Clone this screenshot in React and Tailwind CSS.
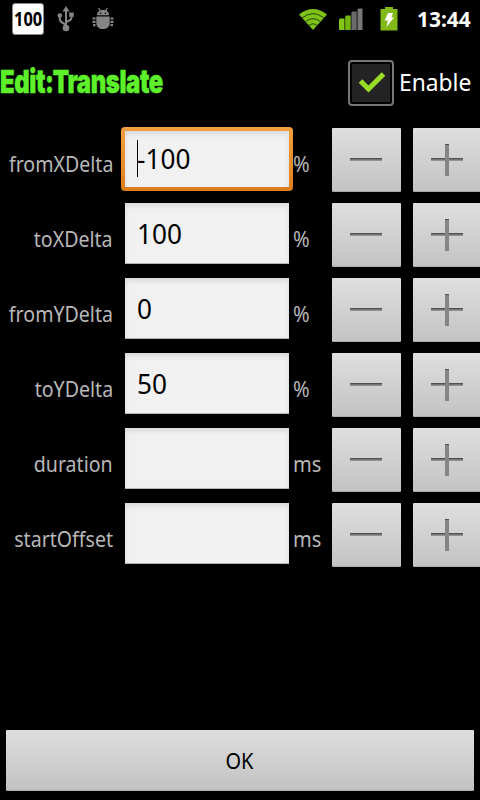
import React, { useState } from 'react';

const initialFields = [
  { name: 'fromXDelta', value: '-100', unit: '%' },
  { name: 'toXDelta', value: '100', unit: '%' },
  { name: 'fromYDelta', value: '0', unit: '%' },
  { name: 'toYDelta', value: '50', unit: '%' },
  { name: 'duration', value: '', unit: 'ms' },
  { name: 'startOffset', value: '', unit: 'ms' },
];

const UsbIcon = () => (
  <svg width="18" height="26" viewBox="0 0 18 26" fill="none" stroke="#858585" strokeWidth="2">
    <path d="M9 4v18M9 20C9 16.5 2.8 18 2.8 13V9.5M9 17c0-3 5.5-1 5.5-5.5V8.5" />
    <path d="M9 0l3.500 5.500H5.500z" fill="#858585" stroke="none" />
    <circle cx="9" cy="22" r="3.300" fill="#858585" stroke="none" />
    <circle cx="2.8" cy="9.5" r="2.3" fill="#858585" stroke="none" />
    <path d="M12.2 6.5h4.6v4.3h-4.6z" fill="#858585" stroke="none" />
  </svg>
);

const BugIcon = () => (
  <svg width="22" height="22" viewBox="0 0 22 22" fill="#858585">
    <path d="M5 7.300C5 4 7 2 11 2s6 2 6 5.300z" />
    <path d="M6.500 0l2 3M15.500 0l-2 3" stroke="#858585" strokeWidth="1.200" />
    <path d="M4.300 8.500h13.400v6.500c0 4-3 6-6.700 6S4.300 19 4.300 15z" />
    <path d="M.5 10.500H3.500M.5 13.800H3.500M1 17.200H3.500M18.500 10.500h3M18.500 13.800h3M18.500 17.200h2.500" fill="none" stroke="#858585" strokeWidth="2.200" />
    <circle cx="8.6" cy="5.2" r=".8" fill="#000" />
    <circle cx="13.4" cy="5.2" r=".8" fill="#000" />
  </svg>
);

const WifiIcon = () => (
  <svg width="32" height="26" viewBox="0 0 32 26">
    <path d="M2 8.500Q16-2.500 30 8.500L16 24z" fill="#7fc21a" />
    <path d="M5 12Q16 3.200 27 12M8.500 15.700Q16 9.600 23.500 15.700M12 19.500Q16 16.200 20 19.500" fill="none" stroke="#1d4a00" strokeWidth="1" />
  </svg>
);

const SignalIcon = () => (
  <svg width="24" height="23" viewBox="0 0 24 23">
    <path d="M0 11.500l1-1h4.500V22H0z" fill="#86c61a" />
    <path d="M6.200 8.500l1-1h4.500V22H6.200z" fill="#75b814" />
    <path d="M12.400 4.500l1-1h4.300V22h-5.300z" fill="#6b6b6b" />
    <path d="M18.500 1.500l1-1h4V22h-5z" fill="#777" />
  </svg>
);

const BatteryIcon = () => (
  <svg width="18" height="24" viewBox="0 0 18 24">
    <path d="M.5 2H5V0h8v2h4.500v21.500H.5z" fill="#80b918" />
    <path d="M8 6h5l-1.500 4.500H14L6.500 20l1.300-6.500H4.600z" fill="#fff" />
  </svg>
);

const StatusBar = () => (
  <header className="flex h-[38px] items-center pl-3">
    <div className="flex h-8 w-8 items-center justify-center rounded-[3px] border border-[#888] bg-white">
      <span className="scale-x-[.82] text-[20px] font-bold leading-none text-black">100</span>
    </div>
    <div className="ml-[13px] h-[26px] w-[18px]"><UsbIcon /></div>
    <div className="ml-[17px] h-[22px] w-[22px]"><BugIcon /></div>
    <div className="ml-[183px] h-[26px] w-8"><WifiIcon /></div>
    <div className="ml-[10px] h-[23px] w-6"><SignalIcon /></div>
    <div className="ml-[17px] h-6 w-[18px]"><BatteryIcon /></div>
    <span className="-mt-0.5 ml-[19px] origin-left scale-x-[.95] text-[22px] font-bold leading-none text-white">13:44</span>
  </header>
);

const StepIcon = ({ plus }) => (
  <svg width="32" height="32" viewBox="0 0 32 32">
    <path d="M0 14h32v1H0z" fill="#505050" />
    <path d="M0 15h32v1H0z" fill="#757575" />
    <path d="M0 16h32v1H0z" fill="#919191" />
    {plus && <path d="M14 0h4v32h-4z" fill="#858585" />}
    {plus && <path d="M14 0h4v1h-4z" fill="#505050" />}
  </svg>
);

const StepButton = ({ plus, onClick }) => (
  <button
    onClick={onClick}
    aria-label={plus ? 'increase' : 'decrease'}
    className="flex h-16 w-[69px] shrink-0 items-center rounded-[1px] border-b border-[#aaa] bg-linear-to-b from-[#dfdfdf] to-[#c3c3c3] pl-[18px] pt-px"
  >
    <StepIcon plus={plus} />
  </button>
);

const FieldRow = ({ field, focused, onStep }) => (
  <div className="flex h-16">
    <div className="flex w-[113px] shrink-0 justify-end pt-5">
      <span className="origin-right scale-x-[.89] text-[22px] leading-[30px] text-[#b8b8b8]">{field.name}</span>
    </div>
    <div
      className={
        focused
          ? '-mt-px ml-2 h-16 w-[172px] shrink-0 rounded-[4px] bg-linear-to-b from-[#f5a040] to-[#dc7d1b] p-1'
          : 'ml-3 mr-1 h-[61px] w-[164px] shrink-0'
      }
    >
      <div
        className={
          focused
            ? 'flex h-full items-center bg-[#f1f1f1] pb-0.5 pl-3 shadow-[inset_0_3px_5px_#d8d8d8]'
            : 'flex h-full items-center border-b border-[#b5b5b5] bg-[#f1f1f1] pl-3 shadow-[inset_0_3px_5px_#d8d8d8]'
        }
      >
        {focused && <span className="-mr-px h-[37px] w-px bg-black" />}
        <span className="origin-left scale-x-[.97] text-[27px] leading-none text-black">{field.value}</span>
      </div>
    </div>
    <div className="w-[39px] shrink-0 pt-5">
      <span className="inline-block origin-left scale-x-[.91] text-[22px] leading-[30px] text-[#b8b8b8]">{field.unit}</span>
    </div>
    <div className="flex gap-3">
      <StepButton onClick={() => onStep(-1)} />
      <StepButton plus onClick={() => onStep(1)} />
    </div>
  </div>
);

function App() {
  const [fields, setFields] = useState(initialFields);
  const [enabled, setEnabled] = useState(true);

  const handleStep = (name, delta) => {
    setFields(fields.map((f) => (f.name === name ? { ...f, value: String(Number(f.value) + delta) } : f)));
  };

  return (
    <div className="flex h-[800px] w-[480px] flex-col overflow-hidden bg-black font-['Noto_Sans',sans-serif]">
      <StatusBar />
      <div className="flex h-[90px] items-center">
        <div className="w-[348px]">
          <h1 className="-mt-0.5 inline-block origin-left scale-x-[.745] whitespace-nowrap font-['Inter',sans-serif] text-[32px] font-black leading-none tracking-[-0.5px] text-[#5df02b] [-webkit-text-stroke:0.5px_#5df02b]">
            Edit:Translate
          </h1>
        </div>
        <button
          onClick={() => setEnabled(!enabled)}
          className="flex h-[46px] w-[46px] shrink-0 items-center justify-center rounded-[4px] border-2 border-[#777] bg-black"
        >
          <span className="flex h-[38px] w-[38px] items-center justify-center bg-[#242424]">
            {enabled && (
              <svg width="28" height="24" viewBox="0 0 28 24" className="-mt-0.5 ml-0.5">
                <path d="M2.500 11l8 8L25.500 4" fill="none" stroke="#98dc28" strokeWidth="5" />
              </svg>
            )}
          </span>
        </button>
        <span className="-mt-0.5 ml-[5px] origin-left scale-x-[.95] text-[24px] leading-none text-white">Enable</span>
      </div>
      <main className="flex flex-col gap-[11px]">
        {fields.map((field, i) => (
          <FieldRow key={field.name} field={field} focused={i === 0} onStep={(d) => handleStep(field.name, d)} />
        ))}
      </main>
      <footer className="mt-auto px-1.5 pb-[9px]">
        <button className="flex h-[61px] w-full items-center justify-center rounded-[1px] border-b border-[#aaa] bg-linear-to-b from-[#dedede] to-[#c2c2c2] pr-0.5 text-[22px] leading-none text-black">
          <span className="scale-x-[.91]">OK</span>
        </button>
      </footer>
    </div>
  );
}

export default App;
